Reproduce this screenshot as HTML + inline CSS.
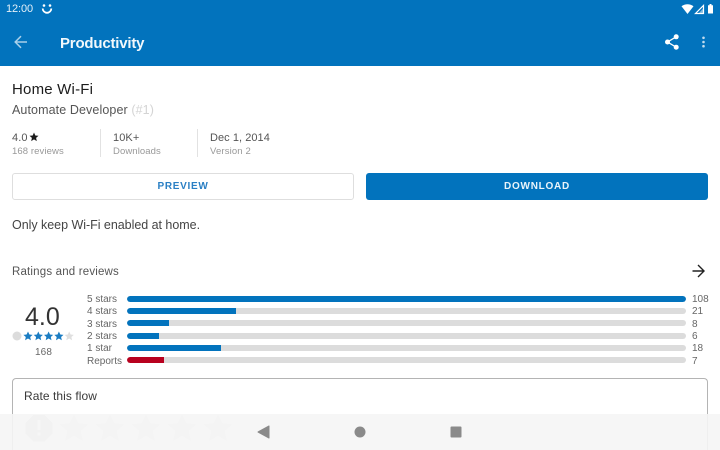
<!DOCTYPE html>
<html><head><meta charset="utf-8"><style>
*{box-sizing:border-box;margin:0;padding:0}
html,body{width:720px;height:450px;overflow:hidden;background:#fff;font-family:"Liberation Sans",sans-serif}
#r{position:absolute;left:0;top:0;width:720px;height:450px;overflow:hidden}
.t{position:absolute;white-space:nowrap;line-height:1}
.bar{position:absolute;left:127px;width:559px;height:6px;background:#dcdcdc;border-radius:3px;overflow:hidden}
.bar i{display:block;height:6px;background:#0273bd;border-radius:3px 0 0 3px}
.l{left:87px;font-size:10px;color:#666;letter-spacing:0}
.n{left:692px;font-size:10px;color:#666;letter-spacing:0}
.v{position:absolute;top:129px;width:1px;height:28px;background:#e2e2e2}
</style></head><body><div id="r">
<div style="position:absolute;left:0;top:0;width:720px;height:66px;background:#0273bd"></div>
<div class="t" style="left:6px;top:3.500px;font-size:11px;color:#e4f0f8;letter-spacing:-.1px">12:00</div>
<svg style="position:absolute;left:40px;top:2px" width="14" height="14" viewBox="0 0 14 14"><circle cx="4" cy="3.500" r="1.300" fill="#fff"/><circle cx="10" cy="3.500" r="1.300" fill="#fff"/><path d="M2.700 6.500a4.300 4.300 0 0 0 8.600 0" fill="none" stroke="#fff" stroke-width="1.800"/></svg>
<svg style="position:absolute;left:680px;top:3px" width="36" height="12" viewBox="0 0 36 12"><path d="M1.500 3.200C5 .6 10 .6 13.500 3.200L7.500 11z" fill="#fff"/><path d="M23.500 2.500V10.500H15.500z" fill="none" stroke="#fff" stroke-width="1.200"/><path d="M23.500 5V10.500H18.500z" fill="#fff" opacity=".5"/><path d="M28 2.200h1.500V1h2v1.200H33V10.500h-5z" fill="#fff"/></svg>
<svg style="position:absolute;left:13px;top:33px" width="16" height="18" viewBox="0 0 16 18"><path d="M14 9H2.800M8 3.200 2.200 9 8 14.800" fill="none" stroke="#a9d0ea" stroke-width="1.500"/></svg>
<div class="t" style="left:60px;top:36px;font-size:15px;font-weight:bold;color:#f2f8fc;letter-spacing:-.2px">Productivity</div>
<svg style="position:absolute;left:663px;top:33px" width="18" height="18" viewBox="0 0 18 18"><circle cx="13.200" cy="3.800" r="2.500" fill="#fff"/><circle cx="4.500" cy="9" r="2.500" fill="#fff"/><circle cx="13.200" cy="14.200" r="2.500" fill="#fff"/><path d="M13.200 3.800 4.500 9l8.700 5.200" fill="none" stroke="#fff" stroke-width="1.300"/></svg>
<svg style="position:absolute;left:701px;top:35px" width="5" height="14" viewBox="0 0 5 14"><circle cx="2.500" cy="2.800" r="1.300" fill="#c3dcee"/><circle cx="2.500" cy="7" r="1.300" fill="#c3dcee"/><circle cx="2.500" cy="11.200" r="1.300" fill="#c3dcee"/></svg>

<div class="t" style="left:12px;top:82px;font-size:15px;color:#1c1c1c;letter-spacing:.2px">Home Wi-Fi</div>
<div class="t" style="left:12px;top:104px;font-size:12.500px;color:#555;letter-spacing:.1px">Automate Developer <span style="color:#d4d4d4">(#1)</span></div>

<div class="t" style="left:12px;top:132.500px;font-size:11px;color:#555;letter-spacing:.1px">4.0</div>
<svg style="position:absolute;left:29px;top:132px" width="10" height="10" viewBox="0 0 10 10"><path d="M5 .5l1.300 3 3.200.3-2.400 2.100.7 3.200L5 7.400 2.200 9.100l.7-3.200L.5 3.800l3.200-.3z" fill="#1a1a1a"/></svg>
<div class="t" style="left:12px;top:146.500px;font-size:9.500px;color:#999;letter-spacing:.1px">168 reviews</div>
<div class="v" style="left:100px"></div>
<div class="t" style="left:113px;top:132.500px;font-size:11px;color:#555;letter-spacing:.1px">10K+</div>
<div class="t" style="left:113px;top:146.500px;font-size:9.500px;color:#999;letter-spacing:.1px">Downloads</div>
<div class="v" style="left:197px"></div>
<div class="t" style="left:210px;top:132.500px;font-size:11px;color:#555;letter-spacing:.05px">Dec 1, 2014</div>
<div class="t" style="left:210px;top:146.500px;font-size:9.500px;color:#999;letter-spacing:.15px">Version 2</div>

<div style="position:absolute;left:12px;top:172.500px;width:342px;height:27px;border:1px solid #dedede;border-radius:3px"></div>
<div class="t" style="left:12px;width:342px;text-align:center;top:182px;font-size:10px;font-weight:bold;color:#2a7fc4;letter-spacing:.7px">PREVIEW</div>
<div style="position:absolute;left:366px;top:172.500px;width:342px;height:27px;background:#0273bd;border-radius:3px"></div>
<div class="t" style="left:366px;width:342px;text-align:center;top:182px;font-size:10px;font-weight:bold;color:#eaf4fa;letter-spacing:.75px">DOWNLOAD</div>

<div class="t" style="left:12px;top:219px;font-size:12.500px;color:#444;letter-spacing:-.03px">Only keep Wi-Fi enabled at home.</div>
<div class="t" style="left:12px;top:267px;font-size:11.500px;color:#555;letter-spacing:.18px">Ratings and reviews</div>
<svg style="position:absolute;left:691px;top:263px" width="16" height="16" viewBox="0 0 16 16"><path d="M1.500 8h11.500M7 2l6 6-6 6" fill="none" stroke="#222" stroke-width="1.400"/></svg>

<div class="t" style="left:25px;top:304.500px;font-size:25px;color:#333">4.0</div>
<svg style="position:absolute;left:12px;top:330px" width="64" height="12" viewBox="0 0 64 12"><circle cx="5" cy="6" r="4.500" fill="#dcdcdc"/>
<g fill="#1a7cc2"><path d="M16 1.500l1.400 3 3.200.35-2.400 2.150.7 3.200-2.900-1.650-2.900 1.650.7-3.200-2.400-2.150 3.200-.35z"/><path transform="translate(10.300 0)" d="M16 1.500l1.400 3 3.200.35-2.400 2.150.7 3.200-2.900-1.650-2.900 1.650.7-3.200-2.400-2.150 3.200-.35z"/><path transform="translate(20.600 0)" d="M16 1.500l1.400 3 3.200.35-2.400 2.150.7 3.200-2.900-1.650-2.900 1.650.7-3.200-2.400-2.150 3.200-.35z"/><path transform="translate(30.900 0)" d="M16 1.500l1.400 3 3.200.35-2.400 2.150.7 3.200-2.900-1.650-2.900 1.650.7-3.200-2.400-2.150 3.200-.35z"/></g>
<path transform="translate(41.200 0)" fill="#dfdfdf" d="M16 1.500l1.400 3 3.200.35-2.400 2.150.7 3.200-2.900-1.650-2.900 1.650.7-3.200-2.400-2.150 3.200-.35z"/></svg>
<div class="t" style="left:35px;top:347.500px;font-size:10px;color:#666;letter-spacing:.1px">168</div>

<div class="t l" style="top:295px">5 stars</div><div class="bar" style="top:295.500px"><i style="width:559px;border-radius:3px"></i></div><div class="t n" style="top:295px">108</div>
<div class="t l" style="top:307px">4 stars</div><div class="bar" style="top:308px"><i style="width:109px"></i></div><div class="t n" style="top:307px">21</div>
<div class="t l" style="top:319.500px">3 stars</div><div class="bar" style="top:320px"><i style="width:42px"></i></div><div class="t n" style="top:319.500px">8</div>
<div class="t l" style="top:332px">2 stars</div><div class="bar" style="top:332.500px"><i style="width:31.500px"></i></div><div class="t n" style="top:332px">6</div>
<div class="t l" style="top:344px">1 star</div><div class="bar" style="top:345px"><i style="width:94px"></i></div><div class="t n" style="top:344px">18</div>
<div class="t l" style="top:356.500px">Reports</div><div class="bar" style="top:357px"><i style="width:36.500px;background:#b8011f"></i></div><div class="t n" style="top:356.500px">7</div>

<div style="position:absolute;left:12px;top:378px;width:696px;height:72px;border:1px solid #b4b4b4;border-bottom:0;border-radius:4px 4px 0 0"></div>
<div class="t" style="left:24px;top:390px;font-size:12px;color:#3a3a3a;letter-spacing:.07px">Rate this flow</div>

<svg style="position:absolute;left:0;top:410px" width="240" height="40" viewBox="0 0 240 40"><path d="M33.500 5h11l8 8v10.500l-8 8h-11l-8-8V13z" fill="#d4d4d4"/><rect x="37.500" y="10" width="3" height="10" fill="#fff"/><rect x="37.500" y="22.500" width="3" height="3" fill="#fff"/>
<g fill="#e4e4e4"><path d="M74 4l4.200 9.300 10 1-7.500 6.700 2.200 10L74 25.800 65.100 31l2.200-10-7.500-6.700 10-1z"/><path transform="translate(36 0)" d="M74 4l4.200 9.300 10 1-7.500 6.700 2.200 10L74 25.800 65.100 31l2.200-10-7.500-6.700 10-1z"/><path transform="translate(72 0)" d="M74 4l4.200 9.300 10 1-7.500 6.700 2.200 10L74 25.800 65.100 31l2.200-10-7.500-6.700 10-1z"/><path transform="translate(108 0)" d="M74 4l4.200 9.300 10 1-7.500 6.700 2.200 10L74 25.800 65.100 31l2.200-10-7.500-6.700 10-1z"/><path transform="translate(144 0)" d="M74 4l4.200 9.300 10 1-7.500 6.700 2.200 10L74 25.800 65.100 31l2.200-10-7.500-6.700 10-1z"/></g></svg>
<div style="position:absolute;left:0;top:414px;width:720px;height:36px;background:rgba(245,245,245,.9)"></div>
<svg style="position:absolute;left:250px;top:420px" width="220" height="24" viewBox="0 0 220 24"><path d="M8 12 19 6v12z" fill="#8a8a8a" stroke="#8a8a8a" stroke-linejoin="round"/><circle cx="110" cy="12" r="5.500" fill="#8a8a8a"/><rect x="200.500" y="6.500" width="11" height="11" rx="1" fill="#8a8a8a"/></svg>
</div></body></html>
